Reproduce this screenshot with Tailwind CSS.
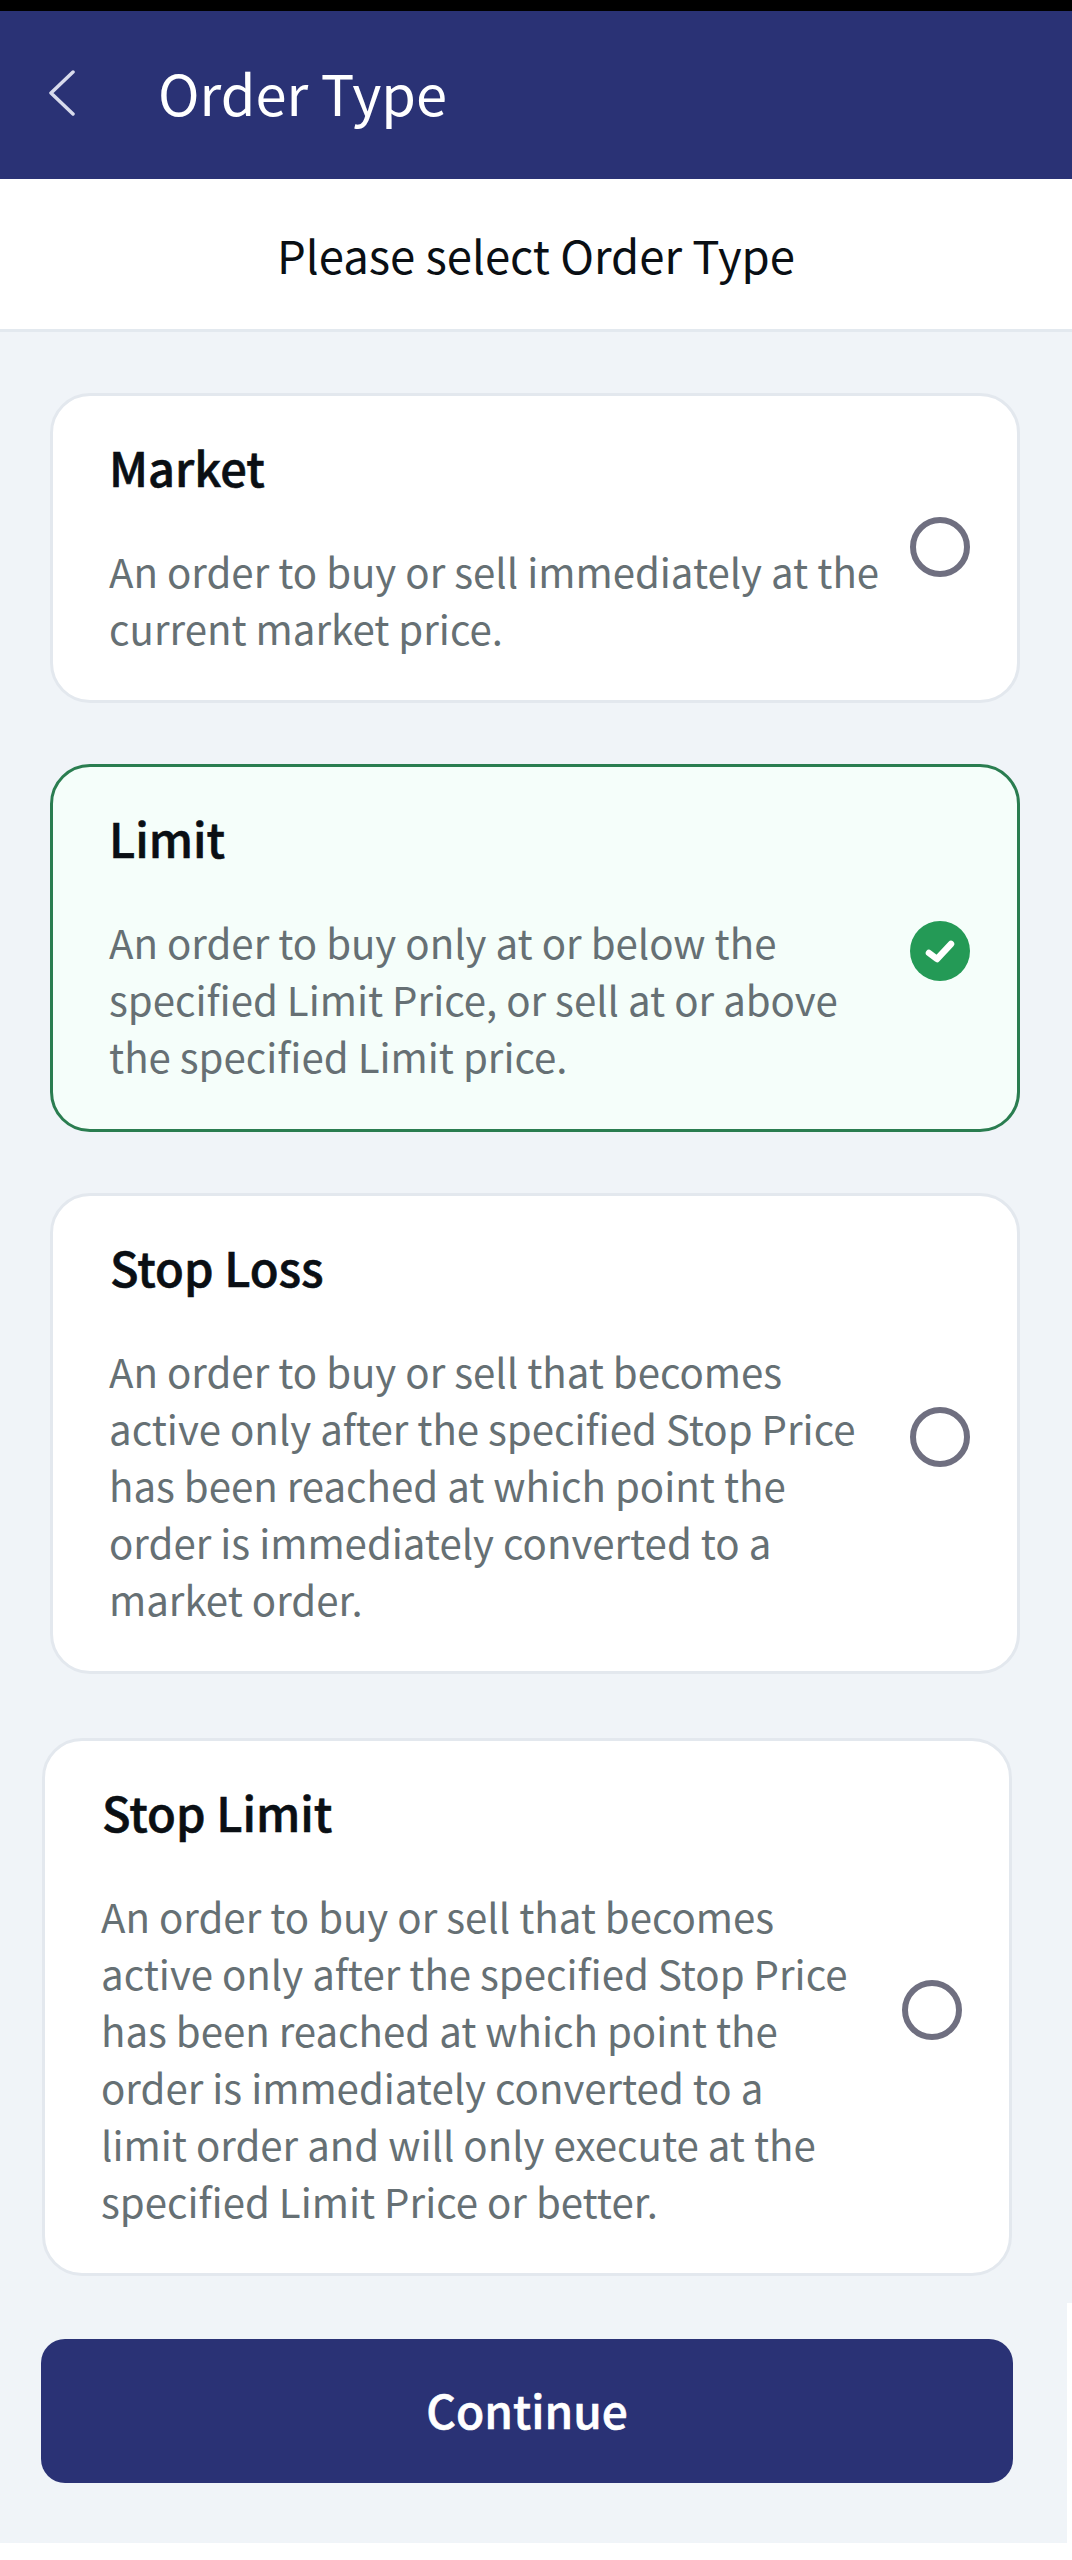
<!DOCTYPE html>
<html lang="en">
  <head>
    <meta charset="utf-8" />
    <title>Order Type</title>
    <meta name="viewport" content="width=device-width, initial-scale=1" />
    <script src="https://cdn.jsdelivr.net/npm/@tailwindcss/browser@4"></script>
  </head>
  <body class="bg-white">
    <div class="relative w-[1072px] h-[2560px] overflow-hidden font-['Noto_Sans_CJK_JP',sans-serif]">
      <div class="h-[11px] bg-black"></div>

      <header class="flex items-center h-[168px] pb-[6px] bg-[#2a3275] text-white">
        <svg class="ml-[48px] mt-[2px] w-[28px] h-[46px]" viewBox="0 0 28 46" fill="none" stroke="#d8dbec" stroke-width="3.5" stroke-linecap="round" stroke-linejoin="round">
          <path d="M25 2 L3 23 L25 44" />
        </svg>
        <h1 class="ml-[82px] text-[56px] leading-none font-normal">Order Type</h1>
      </header>

      <div class="flex items-center justify-center h-[153px] bg-white border-b-[3px] border-[#e3e9ef] text-[45.5px] text-[#0a0f14]">
        Please select Order Type
      </div>

      <main class="h-[2211px] bg-[#f0f4f8] pt-[61px]">
        <section class="flex items-center justify-between h-[310px] ml-[50px] w-[970px] pl-[56px] pr-[47px] bg-white border-[3px] border-[#e3e8ee] rounded-[40px]">
          <div class="w-[775px] pb-[8px]">
            <h2 class="text-[47px] leading-[68px] font-medium [-webkit-text-stroke:0.6px] text-[#0a0f14]">Market</h2>
            <p class="mt-[41px] text-[40.2px] leading-[57px] text-[#667074]">An order to buy or sell immediately at the current market price.</p>
          </div>
          <span class="w-[60px] h-[60px] mb-[2px] rounded-full border-[6px] border-[#6f6f80] shrink-0"></span>
        </section>

        <section class="flex items-center justify-between h-[368px] mt-[61px] ml-[50px] w-[970px] pl-[56px] pr-[47px] bg-[#f5fefa] border-[3px] border-[#2a7d50] rounded-[40px]">
          <div class="w-[775px] pb-[8px]">
            <h2 class="text-[47px] leading-[68px] font-medium [-webkit-text-stroke:0.6px] text-[#0a0f14]">Limit</h2>
            <p class="mt-[41px] text-[40.2px] leading-[57px] text-[#667074]">An order to buy only at or below the specified Limit Price, or sell at or above the specified Limit price.</p>
          </div>
          <span class="flex items-center justify-center w-[60px] h-[60px] mt-[6px] rounded-full bg-[#249a56] shrink-0">
            <svg class="w-[30px] h-[24px]" viewBox="0 0 30 24" fill="none" stroke="#fff" stroke-width="6.5" stroke-linecap="round" stroke-linejoin="round">
              <path d="M4 14 L12 20 L26 5" />
            </svg>
          </span>
        </section>

        <section class="flex items-center justify-between h-[481px] mt-[61px] ml-[50px] w-[970px] pl-[56px] pr-[47px] bg-white border-[3px] border-[#e3e8ee] rounded-[40px]">
          <div class="w-[775px] pb-[8px]">
            <h2 class="ml-[1px] text-[47px] leading-[68px] font-medium [-webkit-text-stroke:0.6px] text-[#0a0f14]">Stop Loss</h2>
            <p class="mt-[41px] text-[40.2px] leading-[57px] text-[#667074]">An order to buy or sell that becomes active only after the specified Stop Price has been reached at which point the order is immediately converted to a market order.</p>
          </div>
          <span class="w-[60px] h-[60px] mt-[6px] rounded-full border-[6px] border-[#6f6f80] shrink-0"></span>
        </section>

        <section class="flex items-center justify-between h-[538px] mt-[64px] ml-[42px] w-[970px] pl-[56px] pr-[47px] bg-white border-[3px] border-[#e3e8ee] rounded-[40px]">
          <div class="w-[775px] pb-[8px]">
            <h2 class="ml-[1px] text-[47px] leading-[68px] font-medium [-webkit-text-stroke:0.6px] text-[#0a0f14]">Stop Limit</h2>
            <p class="mt-[41px] text-[40.2px] leading-[57px] text-[#667074]">An order to buy or sell that becomes active only after the specified Stop Price has been reached at which point the order is immediately converted to a<br />limit order and will only execute at the specified Limit Price or better.</p>
          </div>
          <span class="w-[60px] h-[60px] mt-[6px] rounded-full border-[6px] border-[#6f6f80] shrink-0"></span>
        </section>

        <button class="block h-[144px] mt-[63px] ml-[41px] w-[972px] pb-[4px] bg-[#2a3275] rounded-[24px] text-white text-[46px] font-medium [-webkit-text-stroke:0.6px]">Continue</button>
      </main>

      <div class="absolute top-[2303px] right-0 w-[5px] h-[257px] bg-white"></div>
      <div class="absolute top-[2543px] left-0 w-full h-[17px] bg-white"></div>
    </div>
  </body>
</html>
